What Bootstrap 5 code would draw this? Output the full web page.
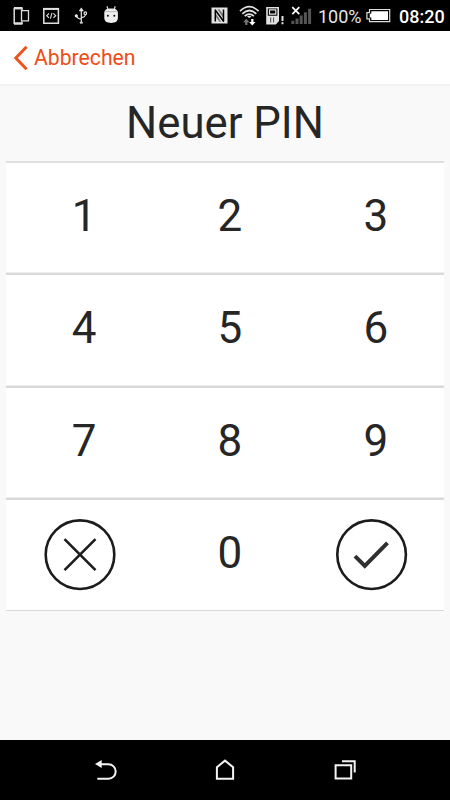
<!DOCTYPE html>
<html lang="de">
<head>
<meta charset="utf-8">
<meta name="viewport" content="width=device-width, initial-scale=1">
<title>Neuer PIN</title>
<link rel="stylesheet" href="https://cdn.jsdelivr.net/npm/bootstrap@5.3.0/dist/css/bootstrap.min.css">
<style>
  body { font-family: Roboto, "Noto Sans", sans-serif; background: #f9f9f9; color: #262626; height: 800px; overflow: hidden; }
  svg { display: block; flex: none; }
  .status-bar { height: 31px; padding-left: 12px; padding-right: 6px; font-size: 18px; line-height: 31px; }
  .status-left { gap: 12px; }
  .battery-text { width: 47px; font-size: 18px; padding-top: 1px; white-space: nowrap; color: #e6e6e6; }
  .clock { width: 45px; font-weight: 500; font-size: 18px; padding-top: 1px; white-space: nowrap; }
  .top-bar { height: 55px; border-bottom: 2px solid #f2f2f2; padding-left: 13px; }
  .back-link { color: #f04e16; font-size: 21.2px; line-height: 26px; gap: 6px; }
  .pin-title { height: 75px; font-size: 43.7px; line-height: 74px; }
  .keypad { margin: 0 6px; height: 450px; border-top: 2px solid #dfdfdf; border-bottom: 1px solid #d8d8d8; }
  .key-row { height: 112.3px; border-bottom: 2px solid #d9d9d9; box-shadow: inset 0 -1px #ececec; }
  .key-row:last-child { height: 110px; border-bottom: 0; box-shadow: none; }
  .key { font-size: 44px; line-height: 1; color: #262626; border-radius: 0; }
  .key-digit { padding: 0 0 4px 10px; }
  .nav-keys { height: 60px; gap: 90px; }
</style>
<script src="https://cdn.jsdelivr.net/npm/bootstrap@5.3.0/dist/js/bootstrap.bundle.min.js"></script>
</head>
<body class="d-flex flex-column m-0">
  <div class="status-bar bg-black text-white d-flex justify-content-between">
    <div class="status-left d-flex">
      <svg width="18" height="31" viewBox="12 0 18 31" fill="none" stroke="#ddd">
        <path d="M22 10V8.5H14.2V23.3H22V21.5" stroke-width="1.5"/><path d="M14 8.2h8.5M14 23.7h8.500" stroke-width="2.200"/>
        <path d="M21.500 10.600h7v10.200h-7z" stroke-width="1.300"/>
      </svg>
      <svg width="18" height="31" viewBox="42 0 18 31" fill="none" stroke="#e0e0e0">
        <path d="M43.800 8.800h14.600v14.400H43.800z" stroke-width="1.500"/><path d="M43 8.900h16" stroke-width="2"/><path d="M49 13.500l-2.300 2.200 2.300 2.200M53.400 13.500l2.300 2.200-2.300 2.200M52 12.800l-1.600 5.800" stroke-width="1.100"/>
      </svg>
      <svg width="18" height="31" viewBox="72 0 18 31" fill="none" stroke="#e8e8e8" stroke-width="1.200">
        <path d="M81.300 9.500v13M76.500 15.800c.5 2.200 2.500 3 4.800 3.300M85.500 14.500c-.3 2.200-2 2.800-4.200 3.100"/><circle cx="85.300" cy="13.200" r="1.300"/><circle cx="76.300" cy="15.800" r="1" fill="#e8e8e8"/><path d="M79.200 11l2.100-3.200 2.100 3.200zM80 22.300h2.600v1H80z" fill="#e8e8e8" stroke-width=".5"/>
      </svg>
      <svg width="18" height="31" viewBox="102 0 18 31">
        <path d="M104.300 13.200c0-3.600 2.300-4.700 6.800-4.700s6.800 1.100 6.800 4.700v4.600c0 3.600-2.400 5.100-6.800 5.100s-6.800-1.500-6.800-5.100z" fill="#eee"/><path d="M108 9.500l-1-3.200M114.200 9.500l1-3.200" stroke="#ddd" stroke-width="1.200"/><path d="M105.500 11.300q5.600 1 11.300 0" stroke="#aaa" stroke-width=".8" fill="none"/><circle cx="107.900" cy="15.700" r="1" fill="#111"/><circle cx="114.300" cy="15.700" r="1" fill="#111"/>
      </svg>
    </div>
    <div class="status-right d-flex">
      <svg width="26" height="31" viewBox="211 0 26 31">
        <path d="M211.500 7.500h16v16h-16z" fill="#e2e2e2"/><path d="M215.300 21.500V10l8.200 11.200V9.500" stroke="#000" stroke-width="1.500" fill="none" stroke-linejoin="round"/><path d="M217.500 9.200h2l4 5.600v3.600zM215.300 12.600v3.600l4 5.600h2z" fill="#000" opacity=".45"/>
      </svg>
      <svg width="28" height="31" viewBox="237 0 28 31" fill="none" stroke="#e2e2e2" stroke-width="1.700">
        <path d="M240 11.200Q249.300 2.200 258.600 11.200M242.300 13.800Q249.300 7.200 256.300 13.800M244.700 16.200Q249.300 12.200 253.900 16.200"/><path d="M247 16.500l1.800 1.200q.5.300 1 0l1.700-1.200q-2.200-1.600-4.500 0z" fill="#e2e2e2" stroke="none"/>
        <path d="M246.300 18.800l3.200 3.500h-2.100v2.700h-2.200v-2.700h-2.100z" fill="#777" stroke="none"/><path d="M252.300 25.500l3.200-3.500h-2.100v-2.900h-2.200V22h-2.100z" fill="#fff" stroke="none"/>
      </svg>
      <svg width="25" height="31" viewBox="265 0 25 31" fill="none" stroke="#e2e2e2">
        <path d="M267 7.700h11.200v13l-2.700 2.900H267z" stroke-width="1.600"/><path d="M269.500 9.900h6.300v4.300h-6.300z" stroke-width="1.200"/><path d="M267 15.700h11v4.500l-2.700 3.300H267z" fill="#e2e2e2" stroke="none"/><path d="M270.700 17.500v5M273.600 17.500v5" stroke="#222" stroke-width=".8"/><path d="M282.500 16v5M282.500 22.300v2" stroke-width="2"/>
      </svg>
      <svg width="28" height="31" viewBox="290 0 28 31">
        <path d="M291.300 20.800h3v3.200h-3zM295.500 18.400h3V24h-3zM299.700 15.400h3V24h-3zM303.900 12.300h3V24h-3zM308.100 8.800h3V24h-3z" fill="#555"/><path d="M292.300 7.200l7 7M299.300 7.200l-7 7" stroke="#fff" stroke-width="1.700"/>
      </svg>
      <div class="battery-text">100%</div>
      <svg width="34" height="31" viewBox="365 0 34 31">
        <path d="M369.500 9.500h20.200v12.200h-20.200v-2.800h-2.600v-6.300h2.600z" fill="none" stroke="#ddd" stroke-width="1.200"/><path d="M371.300 11.300h16.700v8.600h-16.700v-2.300h-1.600v-3.800h1.600z" fill="#fff"/>
      </svg>
      <div class="clock">08:20</div>
    </div>
  </div>

  <nav class="top-bar bg-white d-flex align-items-center">
    <a href="#" class="back-link d-flex align-items-center text-decoration-none">
      <svg width="15" height="26" viewBox="0 0 15 26" fill="none" stroke="#f0521c" stroke-width="3"><path d="M13.600 1.700L2.800 13l10.800 11.300"/></svg>
      <span>Abbrechen</span>
    </a>
  </nav>

  <h1 class="pin-title text-center fw-normal m-0">Neuer PIN</h1>

  <main class="keypad bg-white">
    <div class="key-row row g-0">
      <button class="key key-digit col-4 btn border-0">1</button><button class="key key-digit col-4 btn border-0">2</button><button class="key key-digit col-4 btn border-0">3</button>
    </div>
    <div class="key-row row g-0">
      <button class="key key-digit col-4 btn border-0">4</button><button class="key key-digit col-4 btn border-0">5</button><button class="key key-digit col-4 btn border-0">6</button>
    </div>
    <div class="key-row row g-0">
      <button class="key key-digit col-4 btn border-0">7</button><button class="key key-digit col-4 btn border-0">8</button><button class="key key-digit col-4 btn border-0">9</button>
    </div>
    <div class="key-row row g-0">
      <button class="key col-4 btn border-0 p-0 d-flex align-items-center justify-content-center" aria-label="Löschen">
        <svg width="74" height="74" viewBox="0 0 74 74" fill="none" stroke="#1c1c1c"><circle cx="38" cy="36.700" r="34.300" stroke-width="2.600"/><path d="M22.500 21.200l31 31M53.500 21.200l-31 31" stroke-width="2.600"/></svg>
      </button>
      <button class="key key-digit col-4 btn border-0">0</button>
      <button class="key col-4 btn border-0 p-0 d-flex align-items-center justify-content-center" aria-label="Bestätigen">
        <svg width="74" height="74" viewBox="0 0 74 74" fill="none" stroke="#1c1c1c"><circle cx="37.600" cy="36.700" r="34.300" stroke-width="2.600"/><path d="M21 38.200l9.800 9.800 22.700-23.200" stroke="#303030" stroke-width="4"/></svg>
      </button>
    </div>
  </main>

  <footer class="nav-keys bg-black d-flex align-items-center justify-content-center mt-auto">
    <svg width="30" height="60" viewBox="90 740 30 60" fill="none" stroke="#f4f4f4" stroke-width="2"><path d="M99 764.300h9.500a7 7 0 0 1 0 14.400H97.300"/><path d="M95 764l6.700-4v8z" fill="#f4f4f4" stroke="none"/></svg>
    <svg width="30" height="60" viewBox="210 740 30 60" fill="none" stroke="#f4f4f4" stroke-width="2"><path d="M216.900 778.700v-11.500l8.100-6.600 8.100 6.600v11.500z"/></svg>
    <svg width="30" height="60" viewBox="330 740 30 60" fill="none" stroke="#f4f4f4" stroke-width="2"><path d="M335.600 765.200h15.600v13.400h-15.600zM342 761.300h12.700v11.300"/></svg>
  </footer>
</body>
</html>
